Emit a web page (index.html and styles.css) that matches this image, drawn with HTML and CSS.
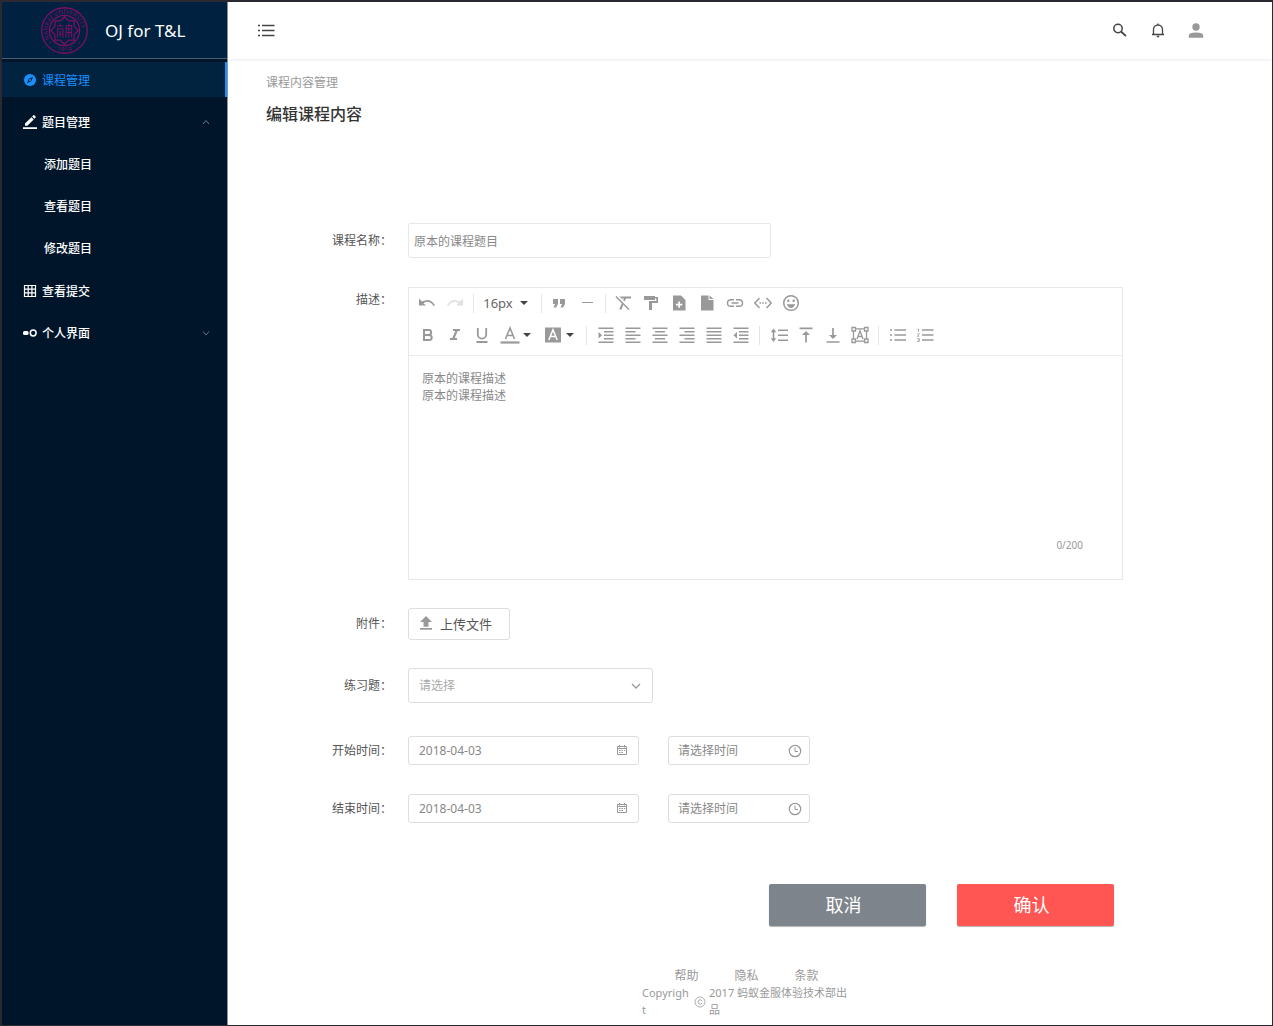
FILE: index.html
```html
<!DOCTYPE html>
<html lang="zh-CN">
<head>
<meta charset="utf-8">
<meta name="viewport" content="width=device-width, initial-scale=1">
<title>编辑课程内容 - OJ for T&amp;L</title>
<link rel="stylesheet" href="styles.css">
</head>
<body class="app">
<aside class="sidebar">
  <div class="brand">
    <svg class="brand-logo" viewBox="0 0 46 46" aria-hidden="true">
      <defs><path id="ring" d="M8.800 31.200A16.400 16.400 0 1 1 37.200 31.200"/></defs>
      <g fill="none" stroke="currentColor">
        <circle cx="23" cy="23" r="22.300" stroke-width="1.300"/>
        <circle cx="23" cy="23" r="14.800" stroke-width="1.200"/>
        <path d="M23 9.500l3.900 4.100h5.500v5.500l4.100 3.900-4.100 3.900v5.500h-5.500L23 36.500l-3.900-4.100h-5.500v-5.500L9.500 23l4.100-3.900v-5.500h5.500z" stroke-width="1.200"/>
        <path d="M15.500 18.500h6.500M18.700 16v3M16 30v-8.500h5.500V30M17.500 24.500h2.500M17.500 27h2.500M18.700 24v5M24.500 18V30M24.500 18h5.500v12M27.200 16v14M25 21.500h5M25 25h5"/>
      </g>
      <text class="brand-ring"><textPath href="#ring">NANKAI UNIVERSITY</textPath></text>
      <text class="brand-ring" x="23" y="43" text-anchor="middle">1919</text>
      <circle cx="9" cy="35" r=".8" fill="currentColor"/><circle cx="37" cy="35" r=".8" fill="currentColor"/>
    </svg>
    <span class="brand-name">OJ for T&amp;L</span>
  </div>
  <nav class="menu">
    <a class="menu-item is-active" href="#">
      <svg class="menu-icon" viewBox="0 0 14 14"><circle cx="7" cy="7" r="6" fill="currentColor"/><path d="M10.200 3.800L8.200 8.200 3.800 10.200 5.800 5.800z" fill="#022340"/><circle cx="7" cy="7" r="1" fill="currentColor"/></svg>
      <span>课程管理</span>
    </a>
    <a class="menu-item" href="#">
      <svg class="menu-icon" viewBox="0 0 14 14"><path d="M0 12.300h14V14H0zM2 10.800V8.400l6.400-6.200 2.300 2.300-6.300 6.300zM9.100 1.500l1.200-1.200q.5-.4 1 0l1.300 1.300q.4.5 0 1l-1.200 1.200z" fill="currentColor"/></svg>
      <span>题目管理</span>
      <svg class="menu-arrow" viewBox="0 0 8 8"><path d="M1 6l3-3.500L7 6" fill="none" stroke="currentColor"/></svg>
    </a>
    <div class="submenu">
      <a class="menu-item" href="#">添加题目</a>
      <a class="menu-item" href="#">查看题目</a>
      <a class="menu-item" href="#">修改题目</a>
    </div>
    <a class="menu-item" href="#">
      <svg class="menu-icon" viewBox="0 0 14 14"><path d="M1.500 1.500h11v11h-11zM5.200 1.500v11M8.900 1.500v11M1.500 5.200h11M1.500 8.900h11" fill="none" stroke="currentColor" stroke-width="1.200"/></svg>
      <span>查看提交</span>
    </a>
    <a class="menu-item" href="#">
      <svg class="menu-icon" viewBox="0 0 14 14"><rect x="0" y="5" width="5.500" height="4" rx="1.500" fill="currentColor"/><circle cx="10.200" cy="7" r="2.900" fill="none" stroke="currentColor" stroke-width="1.500"/></svg>
      <span>个人界面</span>
      <svg class="menu-arrow" viewBox="0 0 8 8"><path d="M1 2.500L4 6l3-3.500" fill="none" stroke="currentColor"/></svg>
    </a>
  </nav>
</aside>

<div class="page">
  <header class="topbar">
    <button class="icon-button" type="button" aria-label="收起菜单">
      <svg class="icon-18" viewBox="0 0 18 18"><path d="M5 3.500h12.500M5 8.500h12.500M5 13.500h12.500M1 3.500h2M1 8.500h2M1 13.500h2" fill="none" stroke="#444" stroke-width="1.500"/></svg>
    </button>
    <div class="topbar-tools">
      <button class="icon-button" type="button" aria-label="搜索">
        <svg class="icon-18" viewBox="0 0 18 18"><circle cx="8" cy="6.500" r="4.200" fill="none" stroke="#444" stroke-width="1.500"/><path d="M11 9.500l5 4.700" stroke="#444" stroke-width="1.800"/></svg>
      </button>
      <button class="icon-button" type="button" aria-label="通知">
        <svg class="icon-18" viewBox="0 0 18 18"><path d="M4 12.500h12M5.500 12.500V7.500a4.500 4.500 0 0 1 9 0v5M10 1.500v1.500M8.800 14.500h2.400" fill="none" stroke="#444" stroke-width="1.300"/></svg>
      </button>
      <button class="icon-button" type="button" aria-label="用户">
        <svg class="icon-18" viewBox="0 0 18 18" fill="#999"><circle cx="10" cy="5" r="3.700"/><path d="M2.800 15.800v-2q0-3.300 7.200-3.300t7.200 3.300v2z"/></svg>
      </button>
    </div>
  </header>

  <main class="content">
    <div class="crumb">课程内容管理</div>
    <h1 class="title">编辑课程内容</h1>

    <form class="form">
      <div class="row row-name">
        <label class="label" for="name">课程名称：</label>
        <input class="control name-input" id="name" type="text" value="原本的课程题目">
      </div>

      <div class="row row-editor">
        <label class="label" for="desc">描述：</label>
        <div class="editor">
          <div class="toolbar">
            <div class="tools">
              <button type="button" class="tool" aria-label="撤销"><svg viewBox="0 0 18 18"><path d="M1 4.500v7h7L5.500 9.200Q11 5.500 15.500 12l1.500-.8Q12 3 4 7.500z" fill="currentColor"/></svg></button>
              <button type="button" class="tool is-disabled" aria-label="重做"><svg viewBox="0 0 18 18"><path d="M17 4.500v7h-7l2.500-2.300Q7 5.500 2.500 12L1 11.200Q6 3 14 7.500z" fill="currentColor"/></svg></button>
              <span class="sep"></span>
              <button type="button" class="tool tool-size">16px<svg class="caret" viewBox="0 0 8 8"><path d="M0 2h8L4 6z" fill="currentColor"/></svg></button>
              <span class="sep"></span>
              <button type="button" class="tool" aria-label="引用"><svg viewBox="0 0 18 18"><path d="M3 5h5v5l-2 3.500H3.500L5 10H3zM10 5h5v5l-2 3.500h-2.500L12 10h-2z" fill="currentColor"/></svg></button>
              <button type="button" class="tool" aria-label="分割线"><svg viewBox="0 0 18 18"><path d="M4 8.500h11" stroke="currentColor"/></svg></button>
              <span class="sep"></span>
              <button type="button" class="tool" aria-label="清除格式"><svg viewBox="0 0 18 18"><path d="M2 2.500l13 13" stroke="currentColor" stroke-width="1.500"/><path d="M5.500 2.500H17v2h-5l-1.300 3-1.500-1.500.7-1.500H7.500zM7.800 9.300l1.500 1.500L7.500 15.500H5.200z" fill="currentColor"/></svg></button>
              <button type="button" class="tool" aria-label="格式刷"><svg viewBox="0 0 18 18"><path d="M2 2h11v1h3v6h-6v7H7V7h7.300V4.500H13V6H2z" fill="currentColor"/></svg></button>
              <button type="button" class="tool" aria-label="插入文件"><svg viewBox="0 0 18 18"><path fill-rule="evenodd" d="M3 1.500h8l4.500 4.500v10.500H3zM8.300 7.500v2.300H6v1.700h2.300v2.300H10v-2.300h2.300V9.800H10V7.500z" fill="currentColor"/></svg></button>
              <button type="button" class="tool" aria-label="文件"><svg viewBox="0 0 18 18"><path d="M3 1.500h7.500V6h5v10.500H3zM11.500 1.500l4 3.500h-4z" fill="currentColor"/></svg></button>
              <button type="button" class="tool" aria-label="链接"><svg viewBox="0 0 18 18"><path d="M8 5.700H4.800a3.300 3.300 0 0 0 0 6.600H8M10 5.700h3.200a3.300 3.300 0 0 1 0 6.600H10M5.500 9h7" fill="none" stroke="currentColor" stroke-width="1.400"/></svg></button>
              <button type="button" class="tool" aria-label="代码"><svg viewBox="0 0 18 18"><path d="M5.500 4L.8 9l4.700 5M12.500 4l4.700 5-4.700 5M5.500 9h1.500M8.300 9h1.500M11 9h1.500" fill="none" stroke="currentColor" stroke-width="1.400"/></svg></button>
              <button type="button" class="tool" aria-label="表情"><svg viewBox="0 0 18 18"><circle cx="9" cy="9" r="7.300" fill="none" stroke="currentColor" stroke-width="1.500"/><circle cx="6.300" cy="6.800" r="1.200" fill="currentColor"/><circle cx="11.700" cy="6.800" r="1.200" fill="currentColor"/><path d="M4.800 10.300h8.400q-1.400 3.700-4.200 3.700t-4.200-3.700z" fill="currentColor"/></svg></button>
            </div>
            <div class="tools tools-format">
              <button type="button" class="tool" aria-label="加粗"><svg viewBox="0 0 18 18"><path d="M5 4h4.700a2.400 2.400 0 0 1 0 4.900H5zM5 8.900h5.200a2.500 2.500 0 0 1 0 5H5z" fill="none" stroke="currentColor" stroke-width="2"/></svg></button>
              <button type="button" class="tool" aria-label="斜体"><svg viewBox="0 0 18 18"><path d="M7 3h7v2h-2.300l-3 7H11v2H4v-2h2.300l3-7H7z" fill="currentColor"/></svg></button>
              <button type="button" class="tool" aria-label="下划线"><svg viewBox="0 0 18 18"><path d="M4.800 2v6.500a4.200 4.200 0 0 0 8.400 0V2M3.500 16h11" fill="none" stroke="currentColor" stroke-width="1.800"/></svg></button>
              <button type="button" class="tool tool-color" aria-label="文字颜色"><svg class="wide" viewBox="0 0 20 18"><path d="M5.500 13L10 2l4.500 11M7 9.500h6" fill="none" stroke="currentColor" stroke-width="1.600"/><path d="M.5 16.500h19" stroke="currentColor" stroke-width="2.200"/></svg><svg class="caret" viewBox="0 0 8 8"><path d="M0 2h8L4 6z" fill="currentColor"/></svg></button>
              <button type="button" class="tool tool-color" aria-label="背景颜色"><svg class="wide" viewBox="0 0 20 18"><path d="M2 1.500h16v15H2z" fill="currentColor"/><path d="M5.800 14L10 3.800 14.200 14M7.300 10.500h5.400" fill="none" stroke="#fff" stroke-width="1.500"/></svg><svg class="caret" viewBox="0 0 8 8"><path d="M0 2h8L4 6z" fill="currentColor"/></svg></button>
              <span class="sep"></span>
              <button type="button" class="tool" aria-label="增加缩进"><svg viewBox="0 0 18 18"><path d="M1.500 2.200h15M7 5.700h9.500M7 9.200h9.500M7 12.700h9.500M1.500 16.200h15" stroke="currentColor" stroke-width="1.500"/><path d="M1.500 6v6.500L5 9.200z" fill="currentColor"/></svg></button>
              <button type="button" class="tool" aria-label="左对齐"><svg viewBox="0 0 18 18"><path d="M1.500 2.200h15M1.500 5.700h10M1.500 9.200h15M1.500 12.700h10M1.500 16.200h15" stroke="currentColor" stroke-width="1.500"/></svg></button>
              <button type="button" class="tool" aria-label="居中"><svg viewBox="0 0 18 18"><path d="M1.500 2.200h15M4 5.700h10M1.500 9.200h15M4 12.700h10M1.500 16.200h15" stroke="currentColor" stroke-width="1.500"/></svg></button>
              <button type="button" class="tool" aria-label="右对齐"><svg viewBox="0 0 18 18"><path d="M1.500 2.200h15M6.500 5.700h10M1.500 9.200h15M6.500 12.700h10M1.500 16.200h15" stroke="currentColor" stroke-width="1.500"/></svg></button>
              <button type="button" class="tool" aria-label="两端对齐"><svg viewBox="0 0 18 18"><path d="M1.500 2.200h15M1.500 5.700h15M1.500 9.200h15M1.500 12.700h15M1.500 16.200h15" stroke="currentColor" stroke-width="1.500"/></svg></button>
              <button type="button" class="tool" aria-label="减少缩进"><svg viewBox="0 0 18 18"><path d="M1.500 2.200h15M7 5.700h9.500M7 9.200h9.500M7 12.700h9.500M1.500 16.200h15" stroke="currentColor" stroke-width="1.500"/><path d="M5 6v6.500L1.500 9.200z" fill="currentColor"/></svg></button>
              <span class="sep"></span>
              <button type="button" class="tool" aria-label="行高"><svg viewBox="0 0 18 18"><path d="M8 4.200h10M8 9.200h10M8 14.200h10M3.500 5v8" stroke="currentColor" stroke-width="1.600"/><path d="M.8 6.200L3.500 2.500l2.700 3.700zM.8 12.200l2.700 3.700 2.700-3.700z" fill="currentColor"/></svg></button>
              <button type="button" class="tool" aria-label="顶部对齐"><svg viewBox="0 0 18 18"><path d="M2.500 2.300h13M9 8v8.500" stroke="currentColor" stroke-width="1.700"/><path d="M5 9l4-4 4 4z" fill="currentColor"/></svg></button>
              <button type="button" class="tool" aria-label="底部对齐"><svg viewBox="0 0 18 18"><path d="M2.500 16h13M9 2v8" stroke="currentColor" stroke-width="1.700"/><path d="M5 9l4 4 4-4z" fill="currentColor"/></svg></button>
              <button type="button" class="tool" aria-label="文本框"><svg viewBox="0 0 18 18"><path d="M1 1.500h3.500V5H1zM13.500 1.500H17V5h-3.500zM1 13h3.500v3.500H1zM13.500 13H17v3.500h-3.500zM4.500 2.800h9M4.500 15.200h9M2.500 5v8M15.500 5v8M6 13l3-8.200L12 13M7 10.500h4" fill="none" stroke="currentColor" stroke-width="1.300"/></svg></button>
              <span class="sep"></span>
              <button type="button" class="tool" aria-label="无序列表"><svg viewBox="0 0 18 18"><path d="M5.500 4h11.500M5.500 9h11.500M5.500 14h11.500M1 4h2M1 9h2M1 14h2" stroke="currentColor" stroke-width="1.600"/></svg></button>
              <button type="button" class="tool" aria-label="有序列表"><svg viewBox="0 0 18 18"><path d="M6 4h11.500M6 9h11.500M6 14h11.500" stroke="currentColor" stroke-width="1.600"/><path d="M1.500 3h1v2.800M1.300 7.700h2l-2 2.600h2M1.300 12.500h2v3h-2M1.800 14h1.500" fill="none" stroke="currentColor" stroke-width=".8"/></svg></button>
            </div>
          </div>
          <textarea class="editor-text" id="desc">原本的课程描述
原本的课程描述</textarea>
          <div class="counter">0/200</div>
        </div>
      </div>

      <div class="row row-upload">
        <label class="label" for="upload">附件：</label>
        <button class="upload" id="upload" type="button"><svg class="upload-icon" viewBox="0 0 14 14"><path d="M7 0l6 6H9.500v4.800h-5V6H1zM1 12h12v1.700H1z" fill="currentColor"/></svg>上传文件</button>
      </div>

      <div class="row row-select">
        <label class="label" for="exercise">练习题：</label>
        <div class="field exercise">
          <select class="control" id="exercise"><option>请选择</option></select>
          <svg class="field-icon" viewBox="0 0 12 12"><path d="M2 4l4 4 4-4" fill="none" stroke="currentColor" stroke-width="1.300"/></svg>
        </div>
      </div>

      <div class="row row-time">
        <label class="label" for="start-date">开始时间：</label>
        <div class="field date">
          <input class="control" id="start-date" type="text" value="2018-04-03">
          <svg class="field-icon" viewBox="0 0 12 12"><path d="M1.500 1.500h9v8h-9zM1.500 3.500h9M3.500 0v2.500M8.500 0v2.500M3 5.500h1.500M5.500 5.500H7M8 5.500h1.200M3 7.500h1.500M5.500 7.500H7" fill="none" stroke="currentColor"/></svg>
        </div>
        <div class="field time">
          <input class="control" type="text" placeholder="请选择时间" aria-label="开始时间">
          <svg class="field-icon clock" viewBox="0 0 14 14"><path d="M7 3.500V7.500h3" fill="none" stroke="currentColor"/><circle cx="7" cy="7" r="5.700" fill="none" stroke="currentColor" stroke-width="1.200"/></svg>
        </div>
      </div>

      <div class="row row-time">
        <label class="label" for="end-date">结束时间：</label>
        <div class="field date">
          <input class="control" id="end-date" type="text" value="2018-04-03">
          <svg class="field-icon" viewBox="0 0 12 12"><path d="M1.500 1.500h9v8h-9zM1.500 3.500h9M3.500 0v2.500M8.500 0v2.500M3 5.500h1.500M5.500 5.500H7M8 5.500h1.200M3 7.500h1.500M5.500 7.500H7" fill="none" stroke="currentColor"/></svg>
        </div>
        <div class="field time">
          <input class="control" type="text" placeholder="请选择时间" aria-label="结束时间">
          <svg class="field-icon clock" viewBox="0 0 14 14"><path d="M7 3.500V7.500h3" fill="none" stroke="currentColor"/><circle cx="7" cy="7" r="5.700" fill="none" stroke="currentColor" stroke-width="1.200"/></svg>
        </div>
      </div>

      <div class="actions">
        <button class="action cancel" type="button">取消</button>
        <button class="action confirm" type="submit">确认</button>
      </div>
    </form>
  </main>

  <footer class="footer">
    <div class="footer-links"><a href="#">帮助</a><a href="#">隐私</a><a href="#">条款</a></div>
    <div class="copyright">
      <span class="copyright-word">Copyright</span>
      <svg class="copyright-icon" viewBox="0 0 12 12"><circle cx="6" cy="6" r="5" fill="none" stroke="currentColor" stroke-width=".8"/><path d="M8 4.800a2.200 2.200 0 1 0 0 2.400" fill="none" stroke="currentColor" stroke-width=".9"/></svg>
      <span class="copyright-owner">2017 蚂蚁金服体验技术部出品</span>
    </div>
  </footer>
</div>
</body>
</html>
```
FILE: styles.css
```css
* { box-sizing: border-box; }

body, input, select, textarea, button {
  font-family: "Noto Sans", "Noto Sans CJK SC", sans-serif;
  font-size: 12px;
}

button { cursor: pointer; }
a { color: inherit; text-decoration: none; }
svg { display: block; flex: none; }

.app {
  margin: 0;
  min-height: 100vh;
  display: grid;
  grid-template-columns: 226px minmax(0, 1fr);
  border: solid #2b2a33;
  border-width: 2px 1px 1px 2px;
  background: #fff;
  color: #555;
}

/* Sidebar */
.sidebar {
  background: #001529;
  border-right: 1px solid #8a949e;
  color: #fff;
}

.brand {
  display: flex;
  align-items: center;
  gap: 17px;
  height: 57px;
  padding-left: 39px;
  background: #002140;
  border-bottom: 1px solid #4a5f76;
}

.brand-logo { width: 47px; height: 47px; color: #7d0f66; }
.brand-ring { font-size: 6px; fill: currentColor; }
.brand-name { font-size: 17px; }

.menu {
  display: flex;
  flex-direction: column;
  gap: 7px;
  padding-top: 3px;
  font-weight: 500;
}

.menu-item {
  display: flex;
  align-items: center;
  gap: 5px;
  height: 35px;
  padding: 0 17px 0 21px;
}

.menu-item.is-active {
  background: #022340;
  border-right: 2px solid #1890ff;
  color: #1890ff;
  font-weight: 400;
}

.menu-icon { width: 14px; height: 14px; }
.menu-arrow { width: 8px; height: 8px; margin-left: auto; color: #70777f; }

.submenu {
  display: flex;
  flex-direction: column;
  gap: 7px;
  padding-bottom: 1px;
}

.submenu .menu-item { padding-left: 42px; }

/* Top bar */
.page { display: flex; flex-direction: column; }

.topbar {
  display: flex;
  align-items: center;
  justify-content: space-between;
  height: 57px;
  padding: 0 68px 0 29px;
  box-shadow: 0 1px 3px rgba(0, 0, 0, .08);
}

.topbar-tools { display: flex; gap: 20px; }
.icon-button { padding: 0; border: 0; background: none; }
.icon-18 { width: 18px; height: 18px; }

/* Content */
.content { flex: 1; padding: 14px 149px 0 38px; }
.crumb { line-height: 20px; color: #999; }
.title { margin: 9px 0 97px; font-size: 16px; font-weight: 500; line-height: 24px; color: #333; }

.row { display: flex; align-items: center; gap: 16px; }

.label { flex: none; width: 126px; line-height: 26px; text-align: right; color: #555; }

.control {
  width: 100%;
  height: 35px;
  padding: 0 10px;
  border: 1px solid #ddd;
  border-radius: 3px;
  background: #fff;
  color: #888;
  appearance: none;
}

.control::placeholder { color: #888; opacity: 1; }

.name-input { max-width: 363px; padding: 0 5px; border-color: #e8e8e8; border-radius: 2px; }

.row-editor { align-items: flex-start; margin: 29px 0 28px; }

.editor {
  flex: 1;
  min-width: 0;
  border: 1px solid #e8e8e8;
  background: #fff;
}

.toolbar {
  display: grid;
  gap: 2px;
  padding: 0 4px 5px;
  border-bottom: 1px solid #ececec;
}

.tools { display: flex; flex-wrap: wrap; align-items: center; }

.tool {
  display: flex;
  align-items: center;
  justify-content: center;
  width: 28px;
  height: 30px;
  padding: 0;
  border: 0;
  background: none;
  color: #999;
}

.tool svg { width: 18px; height: 18px; }
.tool .wide { width: 20px; }
.tool .caret { width: 8px; height: 8px; color: #444; }
.tool.is-disabled { color: #e0e0e0; }
.tool-size { width: 60px; padding-right: 3px; gap: 7px; font-size: 13px; color: #666; }

.tools-format { padding-left: 1px; }
.tools-format .tool { width: 27px; }
.tools-format .tool-color { width: 43px; padding-right: 3px; gap: 3px; }

.sep { width: 8px; height: 19px; display: flex; justify-content: center; }
.sep::before { content: ""; width: 1px; background: #e4e4e4; }
.tools-format .sep { width: 11px; }

.editor-text {
  display: block;
  width: 100%;
  height: 181px;
  padding: 14px 13px;
  border: 0;
  outline: 0;
  resize: none;
  line-height: 17px;
  color: #888;
  background: none;
}

.counter { padding: 0 39px 26px; line-height: 16px; font-size: 10px; text-align: right; color: #999; }

.upload {
  display: flex;
  align-items: center;
  gap: 7px;
  width: 102px;
  height: 32px;
  padding: 0 10px 2px;
  border: 1px solid #ddd;
  border-radius: 3px;
  background: #fff;
  font-size: 13px;
  color: #555;
}

.upload-icon { width: 14px; height: 14px; color: #999; }

.row-select { margin: 28px 0 33px; }

.field { position: relative; }
.exercise { width: 245px; }
.exercise .control { color: #aaa; }
.date { width: 231px; }
.time { width: 142px; margin-left: 13px; }
.date .control, .time .control { height: 29px; display: block; }
.time .control { padding: 0 9px; }

.field-icon {
  position: absolute;
  top: 50%;
  right: 11px;
  width: 12px;
  height: 12px;
  margin-top: -6px;
  color: #999;
  pointer-events: none;
}

.field-icon.clock { right: 8px; width: 14px; height: 14px; margin-top: -7px; }

.row-time + .row-time { margin-top: 29px; }

.actions { display: flex; justify-content: flex-end; gap: 31px; margin-top: 61px; padding-right: 9px; }

.action {
  width: 157px;
  height: 42px;
  padding: 0 8px 2px 0;
  border: 0;
  border-radius: 2px;
  box-shadow: 0 1px 1px rgba(0, 0, 0, .3);
  font-size: 18px;
  color: #fff;
}

.cancel { background: #7d848b; }
.confirm { background: #ff5654; }

/* Footer */
.footer {
  display: flex;
  flex-direction: column;
  align-items: center;
  padding: 40px 7px 7px 0;
  color: #999;
}

.footer-links { display: flex; gap: 36px; line-height: 16px; }

.copyright { display: flex; align-items: center; font-size: 11px; line-height: 17px; }
.copyright-word { width: 49px; word-break: break-all; }
.copyright-icon { width: 12px; height: 12px; margin: 2px 3px 0; }
.copyright-owner { width: 142px; }
```
